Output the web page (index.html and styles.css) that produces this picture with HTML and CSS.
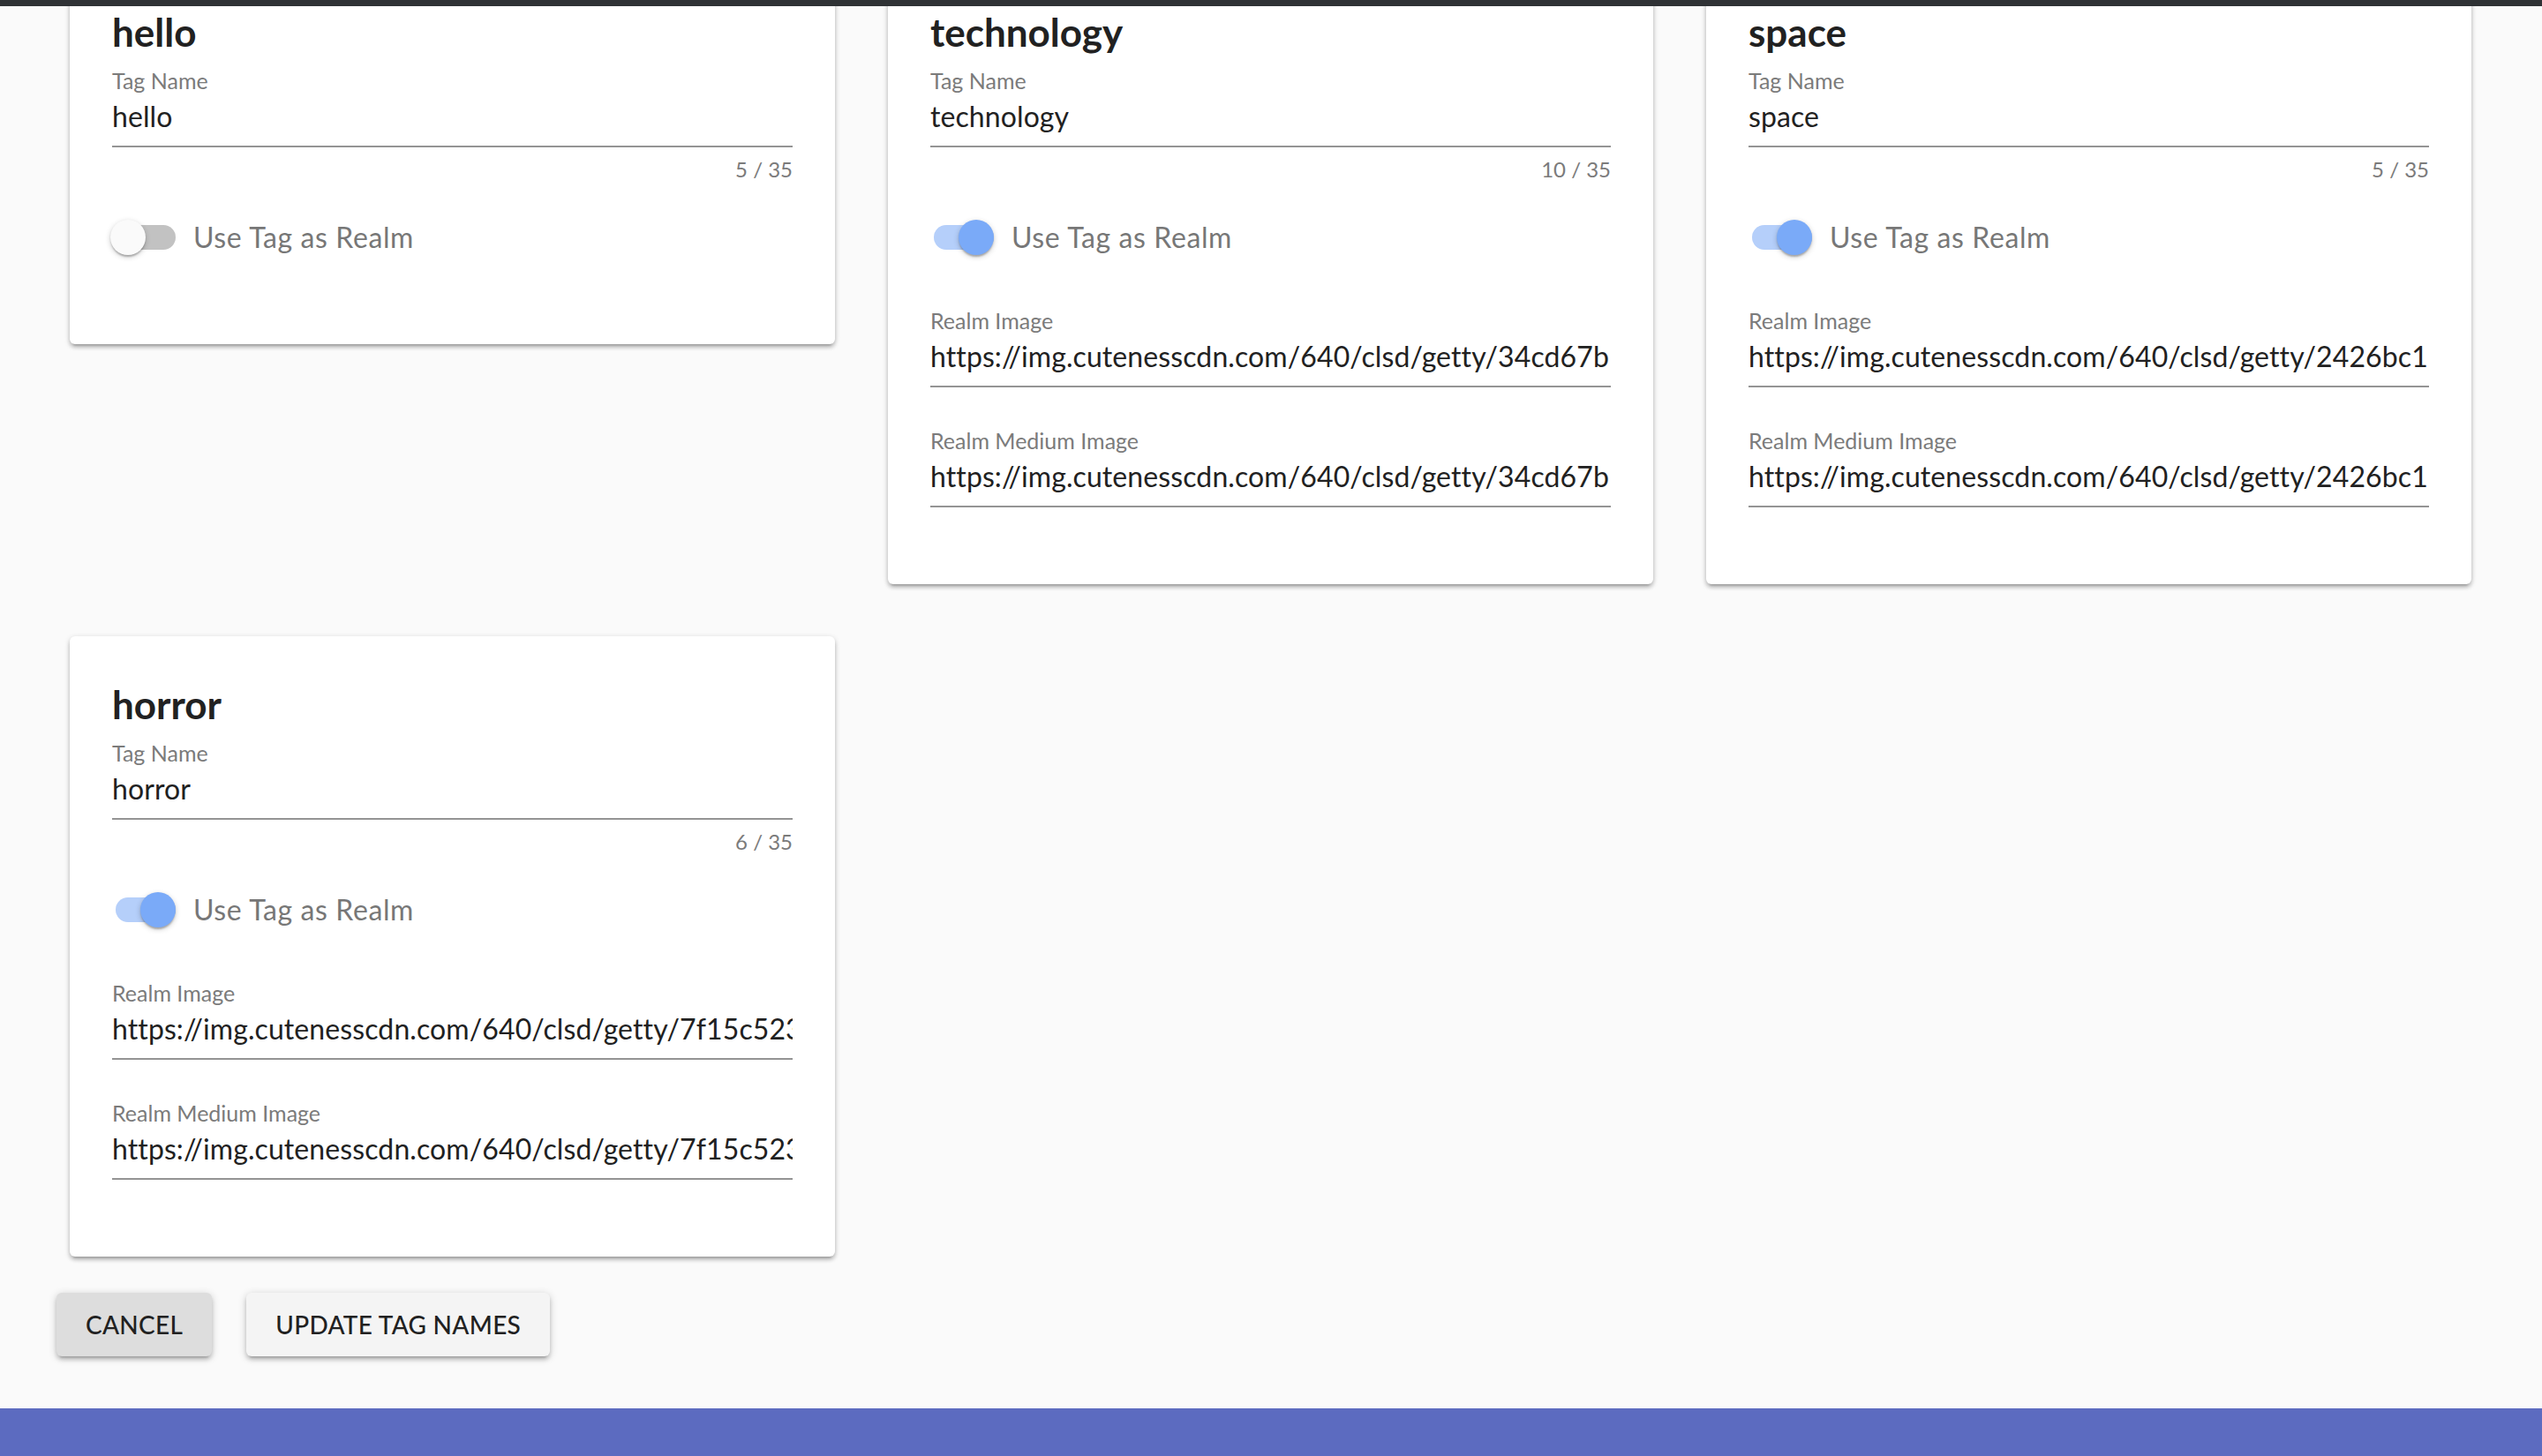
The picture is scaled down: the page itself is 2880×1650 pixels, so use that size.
FILE: index.html
```html
<!DOCTYPE html>
<html lang="en">
<head>
<meta charset="utf-8">
<title>Tag Names</title>
<link rel="stylesheet" href="styles.css">
</head>
<body>
<div class="app">
  <div class="topbar"></div>
  <main class="main">
    <div class="cards">
      <section class="card">
        <h2 class="card-title">hello</h2>
        <div class="field">
          <div class="field-label">Tag Name</div>
          <div class="field-value">hello</div>
        </div>
        <div class="counter">5 / 35</div>
        <div class="toggle-row">
          <span class="switch"><span class="track"></span><span class="thumb"></span></span>
          <span class="toggle-label">Use Tag as Realm</span>
        </div>
      </section>

      <section class="card">
        <h2 class="card-title">technology</h2>
        <div class="field">
          <div class="field-label">Tag Name</div>
          <div class="field-value">technology</div>
        </div>
        <div class="counter">10 / 35</div>
        <div class="toggle-row">
          <span class="switch on"><span class="track"></span><span class="thumb"></span></span>
          <span class="toggle-label">Use Tag as Realm</span>
        </div>
        <div class="field spaced">
          <div class="field-label">Realm Image</div>
          <div class="field-value">https://img.cutenesscdn.com/640/clsd/getty/34cd67b</div>
        </div>
        <div class="field spaced">
          <div class="field-label">Realm Medium Image</div>
          <div class="field-value">https://img.cutenesscdn.com/640/clsd/getty/34cd67b</div>
        </div>
      </section>

      <section class="card">
        <h2 class="card-title">space</h2>
        <div class="field">
          <div class="field-label">Tag Name</div>
          <div class="field-value">space</div>
        </div>
        <div class="counter">5 / 35</div>
        <div class="toggle-row">
          <span class="switch on"><span class="track"></span><span class="thumb"></span></span>
          <span class="toggle-label">Use Tag as Realm</span>
        </div>
        <div class="field spaced">
          <div class="field-label">Realm Image</div>
          <div class="field-value">https://img.cutenesscdn.com/640/clsd/getty/2426bc1</div>
        </div>
        <div class="field spaced">
          <div class="field-label">Realm Medium Image</div>
          <div class="field-value">https://img.cutenesscdn.com/640/clsd/getty/2426bc1</div>
        </div>
      </section>

      <section class="card">
        <h2 class="card-title">horror</h2>
        <div class="field">
          <div class="field-label">Tag Name</div>
          <div class="field-value">horror</div>
        </div>
        <div class="counter">6 / 35</div>
        <div class="toggle-row">
          <span class="switch on"><span class="track"></span><span class="thumb"></span></span>
          <span class="toggle-label">Use Tag as Realm</span>
        </div>
        <div class="field spaced">
          <div class="field-label">Realm Image</div>
          <div class="field-value">https://img.cutenesscdn.com/640/clsd/getty/7f15c523</div>
        </div>
        <div class="field spaced">
          <div class="field-label">Realm Medium Image</div>
          <div class="field-value">https://img.cutenesscdn.com/640/clsd/getty/7f15c523</div>
        </div>
      </section>
    </div>

    <div class="actions">
      <button class="btn btn-cancel" type="button">Cancel</button>
      <button class="btn btn-update" type="button">Update Tag Names</button>
    </div>
  </main>
  <footer class="footer"></footer>
</div>
</body>
</html>
```

FILE: styles.css
```css
* {
  box-sizing: border-box;
}

html, body {
  margin: 0;
  padding: 0;
}

body {
  background: #fafafa;
  font-family: Lato, "Open Sans", "Liberation Sans", sans-serif;
  color: rgba(0, 0, 0, 0.87);
}

.app {
  height: 100vh;
  display: flex;
  flex-direction: column;
}

.topbar {
  height: 7px;
  flex: none;
  background: #2f3235;
}

.main {
  flex: 1;
  min-height: 0;
  overflow: hidden;
  display: flex;
  flex-direction: column;
  justify-content: flex-end;
}

.cards {
  flex: none;
  display: grid;
  grid-template-columns: repeat(3, minmax(0, 1fr));
  gap: 59px 60px;
  padding: 0 80px 0 79px;
  align-items: start;
}

.card {
  min-width: 0;
  background: #fff;
  border-radius: 6px;
  box-shadow: 0 2px 6px rgba(0, 0, 0, 0.2), 0 4px 4px rgba(0, 0, 0, 0.14), 0 6px 2px -4px rgba(0, 0, 0, 0.12);
  padding: 40px 48px 87px;
  display: flex;
  flex-direction: column;
}

.card-title {
  margin: 0;
  font-size: 44px;
  line-height: 74px;
  font-weight: 700;
  color: #212121;
}

.field {
  min-width: 0;
  margin-top: 2px;
  border-bottom: 2px solid #949494;
  padding-bottom: 10px;
}

.field.spaced {
  margin-top: 44px;
}

.field-label {
  font-size: 25px;
  line-height: 32px;
  color: #7b7b7b;
}

.field-value {
  padding-top: 2px;
  font-size: 32px;
  line-height: 46px;
  letter-spacing: 0.1px;
  color: #212121;
  white-space: nowrap;
  overflow: hidden;
}

.counter {
  margin-top: 9px;
  font-size: 24px;
  line-height: 32px;
  color: #7b7b7b;
  text-align: right;
}

.toggle-row {
  margin-top: 33px;
  margin-bottom: 6px;
  height: 56px;
  display: flex;
  align-items: center;
}

.switch {
  position: relative;
  flex: none;
  width: 76px;
  height: 40px;
  margin-left: -2px;
}

.track {
  position: absolute;
  left: 6px;
  top: 6px;
  width: 68px;
  height: 28px;
  border-radius: 14px;
  background: #c2c2c2;
}

.thumb {
  position: absolute;
  left: 0;
  top: 0;
  width: 40px;
  height: 40px;
  border-radius: 50%;
  background: #fafafa;
  box-shadow: 0 2px 6px rgba(0, 0, 0, 0.2), 0 2px 2px rgba(0, 0, 0, 0.14), 0 4px 2px -2px rgba(0, 0, 0, 0.12);
}

.switch.on .track {
  background: #b5cffa;
}

.switch.on .thumb {
  left: 34px;
  background: #7aaaf8;
}

.toggle-label {
  margin-left: 18px;
  font-size: 32px;
  line-height: 56px;
  color: #777;
  letter-spacing: 0.6px;
}

.actions {
  flex: none;
  display: flex;
  gap: 39px;
  padding-left: 64px;
  margin-top: 41px;
  margin-bottom: 59px;
}

.btn {
  height: 72px;
  padding: 0 33px;
  border: none;
  border-radius: 6px;
  font-family: Lato, "Open Sans", "Liberation Sans", sans-serif;
  font-size: 28px;
  font-weight: 500;
  text-transform: uppercase;
  letter-spacing: 0.3px;
  color: #212121;
  box-shadow: 0 2px 10px rgba(0, 0, 0, 0.2), 0 4px 4px rgba(0, 0, 0, 0.14), 0 6px 2px -4px rgba(0, 0, 0, 0.12);
  cursor: pointer;
}

.btn-cancel {
  background: #dddddd;
}

.btn-update {
  background: #f4f4f4;
}

.footer {
  height: 54px;
  flex: none;
  background: #5c6bc0;
}
```
